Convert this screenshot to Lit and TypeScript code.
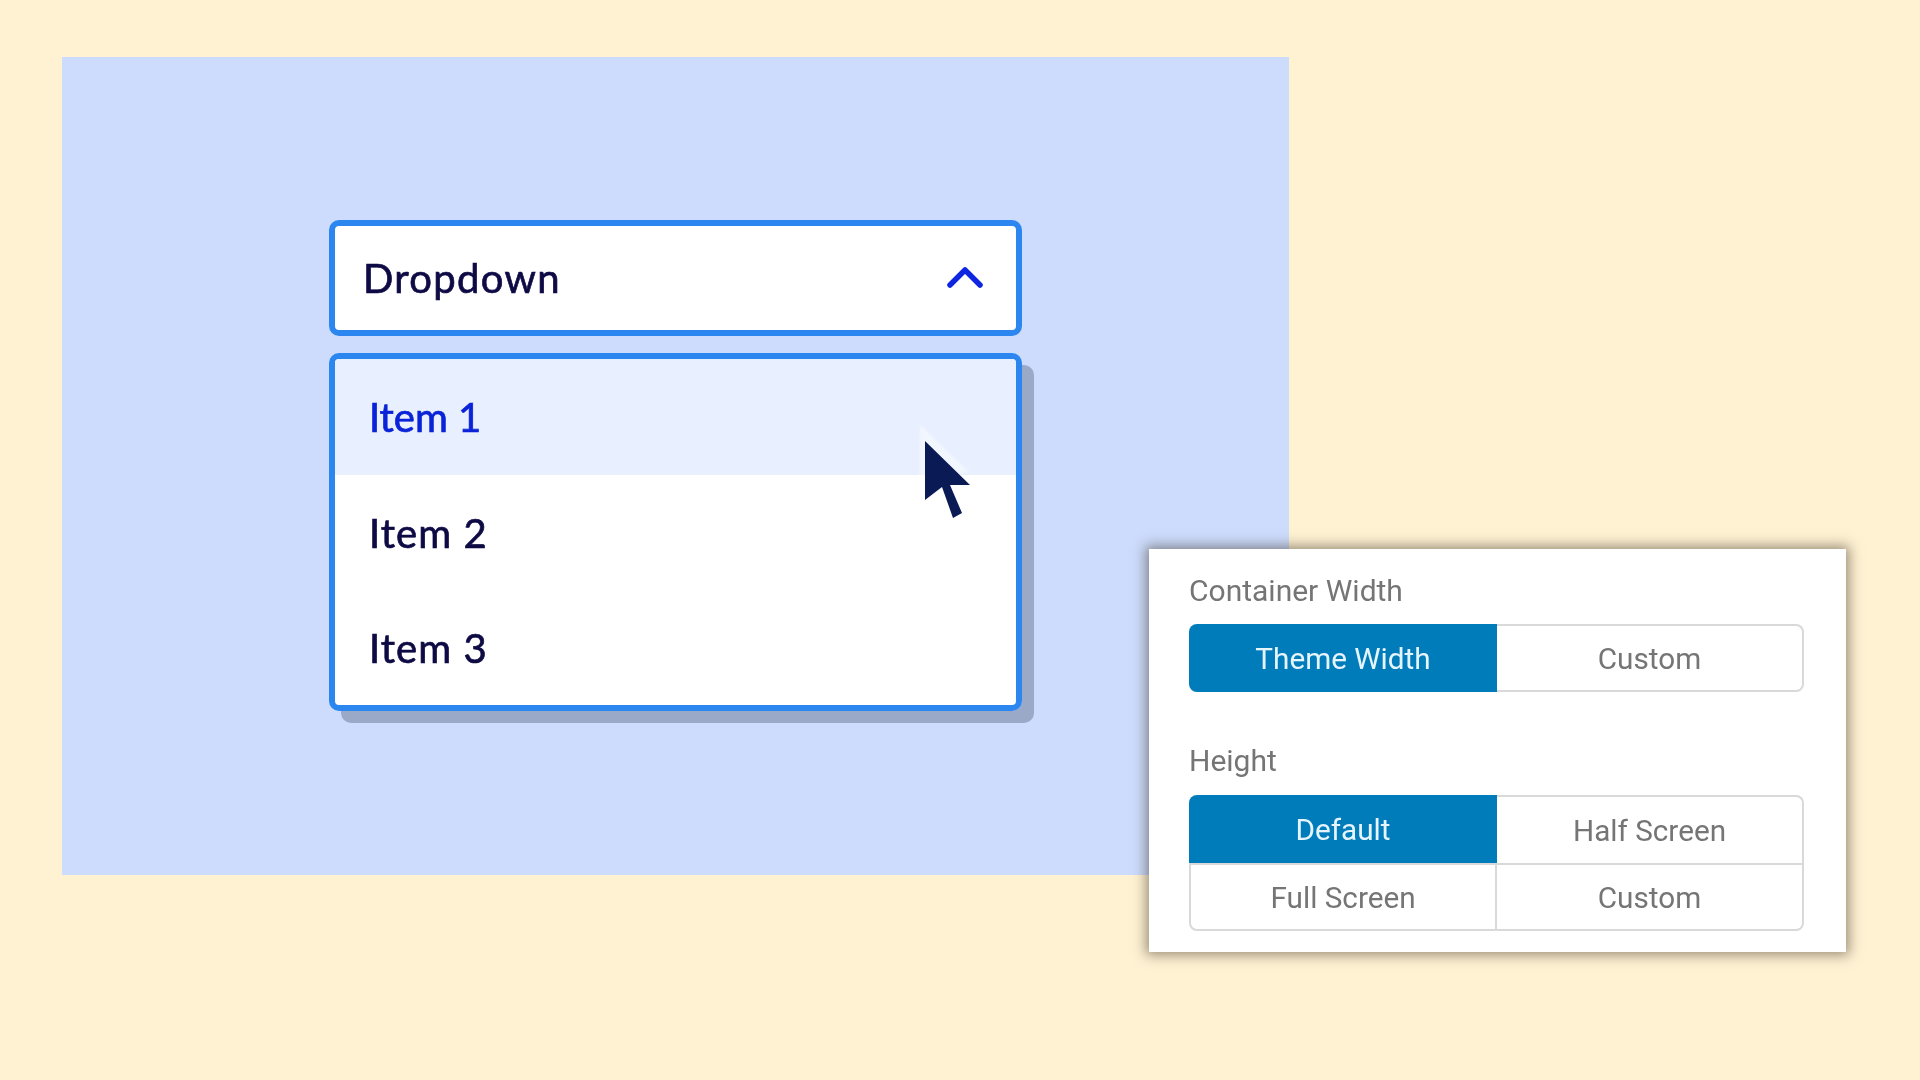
import { LitElement, html, css } from 'lit';
import { customElement } from 'lit/decorators.js';

@customElement('app-root')
export class AppRoot extends LitElement {
  static styles = css`
    :host {
      display: block;
      position: relative;
      width: 1920px;
      height: 1080px;
      overflow: hidden;
      box-sizing: border-box;
      padding: 57px 0 0 62px;
      background: #fff2d3;
      filter: blur(0.6px);
    }

    .stage {
      position: relative;
      box-sizing: border-box;
      width: 1227px;
      height: 818px;
      padding: 163px 0 0 267px;
      background: #cddcfc;
      font-family: 'Lato', sans-serif;
      color: #0e0a44;
      -webkit-text-stroke: 0.7px currentColor;
    }

    .select {
      box-sizing: border-box;
      width: 693px;
      height: 116px;
      display: flex;
      align-items: center;
      justify-content: space-between;
      padding: 0 33px 0 28px;
      background: #fff;
      border: 6px solid #2c86f0;
      border-radius: 10px;
      font-size: 40px;
      letter-spacing: 1.3px;
    }

    .select svg {
      display: block;
      margin-top: -3px;
    }

    .shadow {
      width: 693px;
      margin-top: 17px;
      border-radius: 10px;
      box-shadow: 12px 12px 0 #9aa9c8;
    }

    .menu {
      box-sizing: border-box;
      height: 358px;
      overflow: hidden;
      background: #fff;
      border: 6px solid #2c86f0;
      border-radius: 10px;
    }

    .item {
      height: 115px;
      display: flex;
      align-items: center;
      padding-left: 34px;
      font-size: 40px;
      letter-spacing: 1.1px;
    }

    .item.hover {
      height: 116px;
      background: #e8effe;
      color: #0a22d8;
      letter-spacing: 0;
    }

    .cursor {
      position: absolute;
      left: 850px;
      top: 360px;
    }

    .halo {
      filter: blur(1px);
    }

    .panel {
      position: absolute;
      left: 1149px;
      top: 549px;
      box-sizing: border-box;
      width: 697px;
      height: 403px;
      padding: 24px 40px 0;
      background: #fff;
      box-shadow: 0 0 12px 3px rgba(50, 40, 30, 0.5);
      font-family: 'Roboto', sans-serif;
      font-size: 30px;
      color: #757575;
    }

    .label {
      height: 51px;
      line-height: 36px;
    }

    .label.second {
      margin-top: 51px;
      height: 52px;
    }

    .seg {
      display: grid;
      grid-template-columns: 308px 307px;
      grid-auto-rows: 68px;
      font-size: 29.7px;
      line-height: 36px;
    }

    .seg div {
      box-sizing: border-box;
      display: flex;
      align-items: center;
      justify-content: center;
      padding-top: 1px;
      border-top: 2px solid #d9d9d9;
      border-right: 2px solid #d9d9d9;
      background: #fff;
    }

    .seg div.on {
      background: #007cbb;
      color: #e6f5fd;
      border: 0;
    }

    .seg div.left {
      border-left: 2px solid #d9d9d9;
    }

    .seg div.low {
      border-bottom: 2px solid #d9d9d9;
    }

    .seg .tl {
      border-top-left-radius: 8px;
    }

    .seg .tr {
      border-top-right-radius: 8px;
    }

    .seg .bl {
      border-bottom-left-radius: 8px;
    }

    .seg .br {
      border-bottom-right-radius: 8px;
    }
  `;

  render() {
    return html`
      <div class="stage">
        <div class="select">
          <span>Dropdown</span>
          <svg width="36" height="24" viewBox="0 0 36 24" fill="none" stroke="#0f25e0" stroke-width="5.5" stroke-linecap="round" stroke-linejoin="round">
            <path d="M3 20 L18 5 L33 20" />
          </svg>
        </div>
        <div class="shadow">
          <div class="menu">
            <div class="item hover">Item 1</div>
            <div class="item">Item 2</div>
            <div class="item">Item 3</div>
          </div>
        </div>
        <svg class="cursor" width="70" height="110" viewBox="850 360 70 110">
          <path class="halo" d="M858 368 L858 432 L880 416 L908 416 Z" fill="#fff" opacity="0.45" />
          <path d="M863 384 L863 443 L880 430 L891 461 L900 456 L888 428 L908 428 Z" fill="#0a1a55" />
        </svg>
      </div>
      <div class="panel">
        <div class="label">Container Width</div>
        <div class="seg">
          <div class="on tl bl">Theme Width</div>
          <div class="low tr br">Custom</div>
        </div>
        <div class="label second">Height</div>
        <div class="seg">
          <div class="on tl">Default</div>
          <div class="tr">Half Screen</div>
          <div class="left low bl">Full Screen</div>
          <div class="low br">Custom</div>
        </div>
      </div>
    `;
  }
}
